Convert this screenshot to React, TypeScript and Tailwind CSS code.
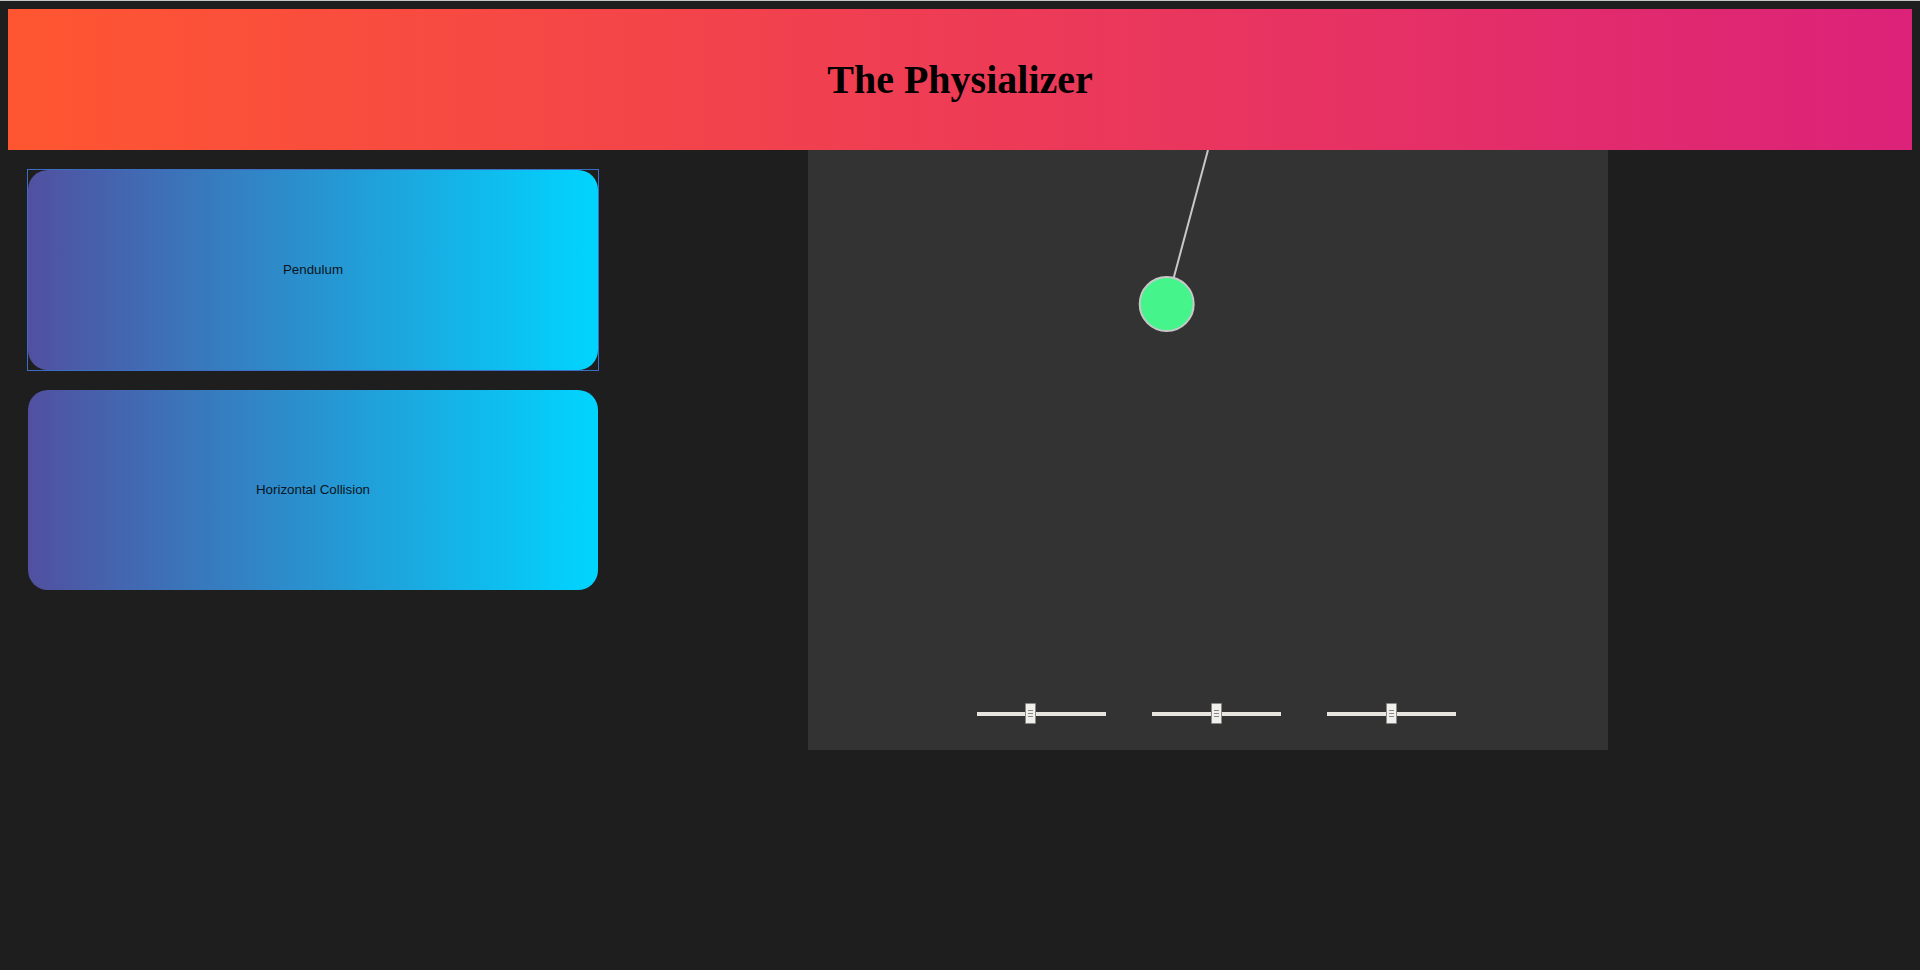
import { useState } from 'react'

const SIMS = ['Pendulum', 'Horizontal Collision']

function Slider({ value }: { value: number }) {
  return (
    <div className="relative w-[129px] h-[21px] flex items-center">
      <div className="w-full h-[4px] bg-[#e8e5e0]" />
      <div
        className="absolute top-0 w-[11px] h-[21px] bg-[#f1efeb] border border-[#8a8884] rounded-[1px] flex flex-col items-center justify-center gap-[2px]"
        style={{ left: `${value * 118}px` }}
      >
        <div className="w-[5px] h-px bg-[#8a8884]" />
        <div className="w-[5px] h-px bg-[#8a8884]" />
        <div className="w-[5px] h-px bg-[#8a8884]" />
      </div>
    </div>
  )
}

export default function App() {
  const [selected, setSelected] = useState(0)

  return (
    <div className="min-h-screen bg-[#1e1e1e] border-t border-[#c8c8c8] p-2" style={{ fontFamily: "'Liberation Sans', Arial, sans-serif" }}>
      {/* Header */}
      <header className="h-[141px] flex items-center justify-center bg-[linear-gradient(to_right,#ff5631,#dc2279)]">
        <h1 className="text-[40px] font-bold text-black leading-none" style={{ fontFamily: "'Liberation Serif', 'Times New Roman', serif" }}>
          The Physializer
        </h1>
      </header>

      <div className="flex">
        {/* Simulation list */}
        <div className="w-[800px] flex flex-col items-start gap-5 p-5">
          {SIMS.map((name, i) => (
            <div key={name} className={selected === i ? '-m-px border border-[#3b6ec2]' : ''}>
              <button
                onClick={() => setSelected(i)}
                className="block w-[570px] h-[200px] rounded-[20px] bg-[linear-gradient(to_right,#5150a0,#00d5ff)] text-[13.33px] text-[#0b1420] outline-none"
              >
                {name}
              </button>
            </div>
          ))}
        </div>

        {/* Canvas */}
        <div className="relative w-[800px] h-[600px] bg-[#333333] flex flex-col justify-end">
          <svg className="absolute inset-0" width="800" height="600" viewBox="0 0 800 600">
            <line x1="400" y1="0" x2="358.7" y2="154" stroke="#c8c8c8" strokeWidth="2" />
            <circle cx="358.7" cy="154" r="27" fill="#45f58c" stroke="#c8c8c8" strokeWidth="2" />
          </svg>
          <div className="relative flex gap-[46px] pl-[169px] pb-[26px]">
            <Slider value={0.407} />
            <Slider value={0.5} />
            <Slider value={0.5} />
          </div>
        </div>
      </div>
    </div>
  )
}
